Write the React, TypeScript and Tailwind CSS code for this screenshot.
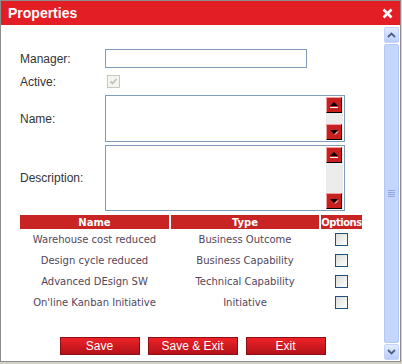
const rows = [
    { name: "Warehouse cost reduced", type: "Business Outcome" },
    { name: "Design cycle reduced", type: "Business Capability" },
    { name: "Advanced DEsign SW", type: "Technical Capability" },
    { name: "On'line Kanban Initiative", type: "Initiative" },
]

const RedArrow = ({ up }: { up?: boolean }) => {
    return (
        <div className="w-[16px] h-[16px] bg-[#c8201f] border-t border-l border-t-[#f3a0a0] border-l-[#f3a0a0] border-r border-b border-r-black border-b-black flex items-center justify-center">
            <svg width="10" height="8" viewBox="0 0 10 8">
                {up ? (
                    <>
                        <path d="M1 5 L5 1 L9 5 Z" fill="#000" />
                        <path d="M1 6.5 H9" stroke="#fff" strokeWidth="1" />
                    </>
                ) : (
                    <>
                        <path d="M1 2 L5 6 L9 2 Z" fill="#000" />
                        <path d="M6 6.5 L9 3.5" stroke="#fff" strokeWidth="1" />
                    </>
                )}
            </svg>
        </div>
    )
}

const TextBox = ({ h }: { h: string }) => {
    return (
        <div className={`w-[240px] ${h} border border-[#7f9db9] bg-white flex justify-end pr-px py-px`}>
            <div className="w-[17px] h-full bg-[#ececec] flex flex-col justify-between items-start">
                <RedArrow up />
                <RedArrow />
            </div>
        </div>
    )
}

const ScrollBtn = ({ up }: { up?: boolean }) => {
    return (
        <div className="w-[15px] h-[16px] rounded-[2px] border border-[#c3d3fd] bg-gradient-to-b from-[#e3ebfe] to-[#b9cdfb] flex items-center justify-center">
            <svg width="9" height="6" viewBox="0 0 9 6">
                <path d={up ? "M1 5 L4.5 1.5 L8 5" : "M1 1 L4.5 4.5 L8 1"} fill="none" stroke="#4d6185" strokeWidth="1.8" />
            </svg>
        </div>
    )
}

const App = () => {
    return (
        <div className="w-[402px] h-[364px] bg-[#d4d0c8] [font-family:'Liberation_Sans',Arial,sans-serif]">
            <div className="w-[401px] h-[362px] border border-[#8e8e8e] bg-white flex flex-col">
                <div className="h-[24px] bg-[#e31e24] flex items-center justify-between pl-[7px] pr-[7px]">
                    <span className="text-white font-bold text-[14px] leading-none">Properties</span>
                    <svg width="11" height="11" viewBox="0 0 11 11">
                        <path d="M1.5 1.5 L9.5 9.5 M9.5 1.5 L1.5 9.5" stroke="#fff" strokeWidth="2.6" />
                    </svg>
                </div>
                <div className="flex-1 flex">
                    <div className="flex-1 flex flex-col pl-[19px] pt-[24px] text-[12px] text-[#333]">
                        <div className="flex items-center h-[19px]">
                            <span className="w-[85px]">Manager:</span>
                            <div className="w-[202px] h-[19px] border border-[#7f9db9] bg-white" />
                        </div>
                        <div className="flex items-center h-[13px] mt-[7px]">
                            <span className="w-[87px]">Active:</span>
                            <div className="w-[13px] h-[13px] border border-[#cac8bb] bg-[#f4f4f0] flex items-center justify-center">
                                <svg width="9" height="9" viewBox="0 0 9 9">
                                    <path d="M1.5 4.5 L3.5 6.5 L7.5 2" fill="none" stroke="#c2c2b8" strokeWidth="1.8" />
                                </svg>
                            </div>
                        </div>
                        <div className="flex items-center mt-[7px]">
                            <span className="w-[85px]">Name:</span>
                            <TextBox h="h-[47px]" />
                        </div>
                        <div className="flex items-center mt-[3px]">
                            <span className="w-[85px]">Description:</span>
                            <TextBox h="h-[66px]" />
                        </div>
                        <div className="mt-[4px] grid grid-cols-[149px_148px_41px] gap-x-[2px] [font-family:'DejaVu_Sans',Verdana,sans-serif]">
                            <div className="h-[14px] bg-[#c92424] text-white font-bold text-[10px] flex items-center justify-center">Name</div>
                            <div className="h-[14px] bg-[#c92424] text-white font-bold text-[10px] flex items-center justify-center">Type</div>
                            <div className="h-[14px] bg-[#c92424] text-white font-bold text-[10px] flex items-center justify-center tracking-[-0.5px]">Options</div>
                            {rows.map((r) => (
                                <div key={r.name} className="contents">
                                    <div className="h-[21px] flex items-center justify-center text-[10px] text-[#54465a]">{r.name}</div>
                                    <div className="h-[21px] flex items-center justify-center text-[10px] text-[#54465a]">{r.type}</div>
                                    <div className="h-[21px] flex items-center justify-center">
                                        <div className="w-[13px] h-[13px] border border-[#1c5180] bg-gradient-to-br from-[#dcdcd7] to-white" />
                                    </div>
                                </div>
                            ))}
                        </div>
                        <div className="mt-[24px] -ml-[19px] flex justify-center gap-[8px]">
                            {[["Save", "w-[80px]"], ["Save & Exit", "w-[90px]"], ["Exit", "w-[80px]"]].map(([t, w]) => (
                                <div key={t} className={`${w} h-[18px] border border-[#8d0f13] bg-gradient-to-b from-[#ee2228] to-[#b5121a] text-white text-[12px] flex items-center justify-center`}>
                                    {t}
                                </div>
                            ))}
                        </div>
                    </div>
                    <div className="w-[16px] pt-[2px] pb-px pr-px flex flex-col gap-[1px]">
                        <ScrollBtn up />
                        <div className="flex-1 rounded-[2px] border border-[#b4c8f6] bg-[#c4d6fc] flex items-center justify-center">
                            <svg width="7" height="7" viewBox="0 0 7 7">
                                <path d="M0 0.5 H7 M0 2.5 H7 M0 4.5 H7 M0 6.5 H7" stroke="#8da6dc" strokeWidth="1" />
                            </svg>
                        </div>
                        <ScrollBtn />
                    </div>
                </div>
            </div>
        </div>
    )
}

export default App
